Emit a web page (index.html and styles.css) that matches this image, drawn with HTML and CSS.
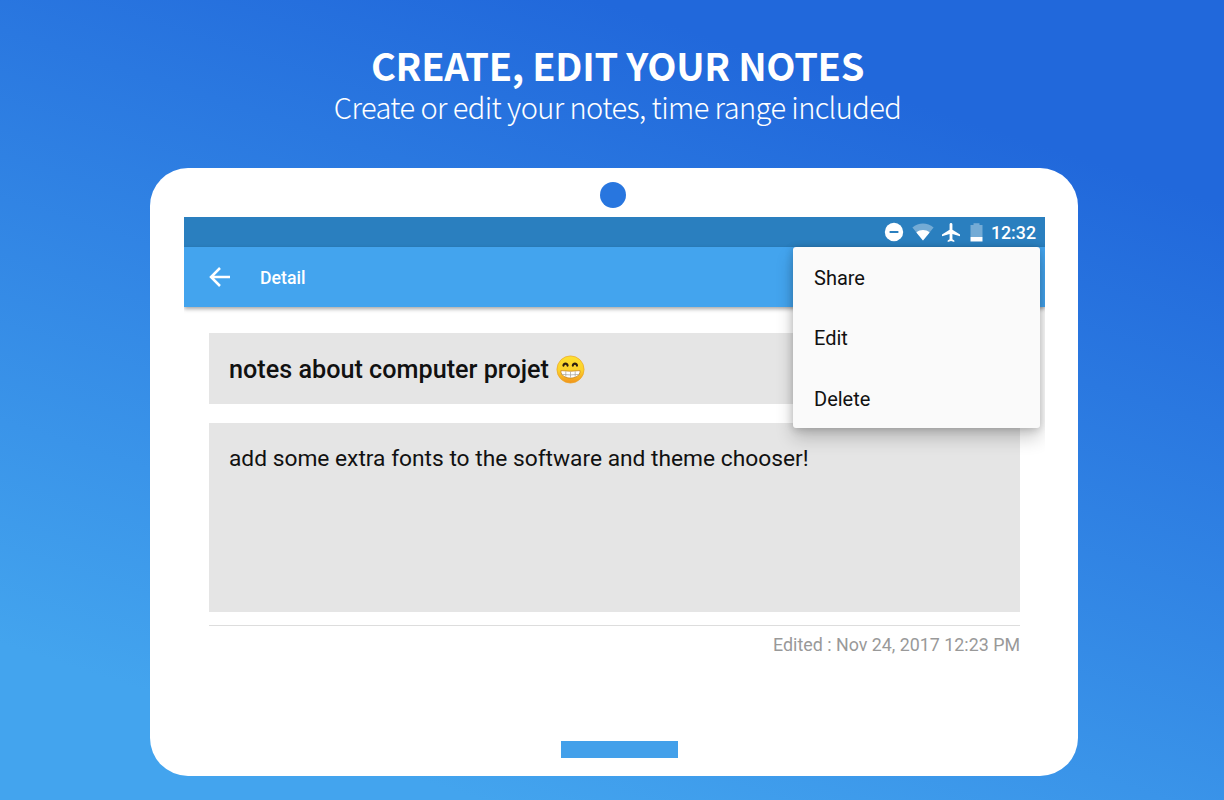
FILE: index.html
```html
<!DOCTYPE html>
<html lang="en">
<head>
    <meta charset="UTF-8">
    <meta name="viewport" content="width=device-width, initial-scale=1.0">
    <title>Create, edit your notes</title>
    <link rel="stylesheet" href="styles.css">
</head>
<body>
    <header class="intro">
        <h1>CREATE, EDIT YOUR NOTES</h1>
        <p>Create or edit your notes, time range included</p>
    </header>

    <div class="tablet">
        <div class="camera"></div>
        <div class="screen">
            <div class="status-bar">
                <svg class="dnd" width="20" height="20" viewBox="0 0 20 20">
                    <circle cx="10" cy="10" r="9.2" fill="#fff"/>
                    <path d="M5.6 10h8.8" stroke="#2a7fbf" stroke-width="2"/>
                </svg>
                <svg class="wifi" width="22" height="18" viewBox="0 0 22 18">
                    <path d="M11 17.6L.4 4.4C6.6-.9 15.4-.9 21.6 4.4z" fill="#fff" fill-opacity=".35"/>
                    <path d="M11 17.6L4.4 9.4c4-3.2 9.2-3.2 13.2 0z" fill="#fff"/>
                </svg>
                <svg class="plane" width="18" height="19" viewBox="2.5 2 18 20">
                    <path d="M21 16v-2l-8-5V3.5c0-.83-.67-1.5-1.5-1.5S10 2.670 10 3.500V9l-8 5v2l8-2.500V19l-2 1.500V22l3.500-1 3.500 1v-1.500L13 19v-5.500l8 2.500z" fill="#fff"/>
                </svg>
                <svg class="battery" width="13" height="19" viewBox="0 0 13 19">
                    <path d="M.5 2h3V.3h6V2h3v12H.5z" fill="#fff" fill-opacity=".35"/>
                    <path d="M.5 14h12v4.500H.5z" fill="#fff"/>
                </svg>
                <span class="clock">12:32</span>
            </div>
            <div class="app-bar">
                <svg width="22" height="20" viewBox="0 0 22 20">
                    <path d="M21 10H2.5M11 1L2 10l9 9" fill="none" stroke="#fff" stroke-width="2.5"/>
                </svg>
                <h2>Detail</h2>
            </div>
            <div class="content">
                <div class="note-title">
                    <span>notes about computer projet</span>
                    <svg class="emoji" width="29" height="29" viewBox="0 0 29 29">
                        <defs>
                            <linearGradient id="face" x1="0" y1="0" x2="0" y2="1">
                                <stop offset="0" stop-color="#fde030"/>
                                <stop offset=".55" stop-color="#fbd02c"/>
                                <stop offset="1" stop-color="#f0921c"/>
                            </linearGradient>
                        </defs>
                        <circle cx="14.5" cy="14.5" r="13.6" fill="url(#face)" stroke="#eda524" stroke-width=".7"/>
                        <path d="M7.4 10.6c.6-2.7 3.6-2.7 4.2 0M16.8 10.6c.6-2.7 3.6-2.7 4.2 0" fill="none" stroke="#2e1f10" stroke-width="2.1" stroke-linecap="round"/>
                        <path d="M4.9 15.6q9.6 1.2 19.2 0c.8 10-20 10-19.2 0z" fill="#fff" stroke="#c98522" stroke-width=".8"/>
                        <path d="M5.6 19.4q8.900 1 17.800 0M9.800 16.300v5.600M14.500 16.500v6.200M19.200 16.300v5.600" fill="none" stroke="#a5a198" stroke-width=".7"/>
                    </svg>
                </div>
                <div class="note-text">add some extra fonts to the software and theme chooser!</div>
                <div class="edited">Edited : Nov 24, 2017 12:23 PM</div>
            </div>
            <ul class="menu">
                <li>Share</li>
                <li>Edit</li>
                <li>Delete</li>
            </ul>
        </div>
        <div class="home-button"></div>
    </div>
</body>
</html>
```
FILE: styles.css
```css
* {
    box-sizing: border-box;
}

body {
    margin: 0;
    height: 800px;
    overflow: hidden;
    background: linear-gradient(198deg, #2168db 17%, #43a4ee 87%);
    font-family: Roboto, sans-serif;
    color: #111;
}

h1, h2, p, ul {
    margin: 0;
    padding: 0;
}

.intro {
    height: 168px;
    padding: 43px 0 0 11px;
    color: #fff;
    text-align: center;
    font-family: "Noto Sans CJK SC", sans-serif;
}

.intro h1 {
    font-size: 38px;
    line-height: 43px;
    font-weight: 700;
    letter-spacing: -0.3px;
}

.intro p {
    font-size: 29px;
    line-height: 40px;
    font-weight: 300;
    letter-spacing: -0.58px;
}

.tablet {
    display: flex;
    flex-direction: column;
    width: 928px;
    height: 608px;
    margin-left: 150px;
    padding: 14px 33px 18px 34px;
    background-color: #fff;
    border-radius: 38px;
}

.camera {
    width: 26px;
    height: 26px;
    margin-left: 416px;
    background-color: #2876df;
    border-radius: 50%;
}

.screen {
    position: relative;
    height: 516px;
    margin-top: 9px;
    overflow: hidden;
}

.status-bar {
    display: flex;
    align-items: center;
    justify-content: flex-end;
    height: 30px;
    padding-right: 9px;
    background-color: #2a7fbf;
    color: #fff;
}

.wifi {
    margin-left: 8px;
}

.plane {
    margin-left: 8px;
}

.battery {
    margin-left: 10px;
}

.clock {
    margin-left: 8px;
    font-size: 17.8px;
    font-weight: 500;
}

.app-bar {
    display: flex;
    align-items: center;
    height: 60px;
    padding-left: 25px;
    background-color: #43a4ee;
    box-shadow: 0 2px 4px rgba(0, 0, 0, 0.35);
    color: #fff;
}

.app-bar h2 {
    margin-left: 29px;
    padding-top: 1px;
    font-size: 17.7px;
    font-weight: 500;
}

.content {
    padding: 26px 25px 0;
}

.note-title {
    display: flex;
    align-items: center;
    height: 71px;
    padding: 2px 20px 0;
    background-color: #e5e5e5;
    font-size: 25.2px;
    font-weight: 500;
}

.emoji {
    margin-left: 7px;
}

.note-text {
    height: 189px;
    margin-top: 19px;
    padding: 21px 20px;
    background-color: #e5e5e5;
    font-size: 22.75px;
    line-height: 30px;
}

.edited {
    margin-top: 13px;
    padding-top: 8px;
    border-top: 1px solid #ddd;
    color: #999;
    font-size: 17.85px;
    line-height: 22px;
    text-align: right;
}

.menu {
    position: absolute;
    top: 30px;
    right: 5px;
    width: 247px;
    background-color: #fafafa;
    border-radius: 3px;
    box-shadow: 0 10px 18px rgba(0, 0, 0, 0.2), 0 1px 8px rgba(0, 0, 0, 0.2);
    list-style: none;
}

.menu li {
    height: 60.4px;
    padding-left: 21px;
    font-size: 20px;
    line-height: 62.4px;
}

.home-button {
    width: 117px;
    height: 17px;
    margin: 8px 0 0 377px;
    background-color: #43a0ea;
}
```
